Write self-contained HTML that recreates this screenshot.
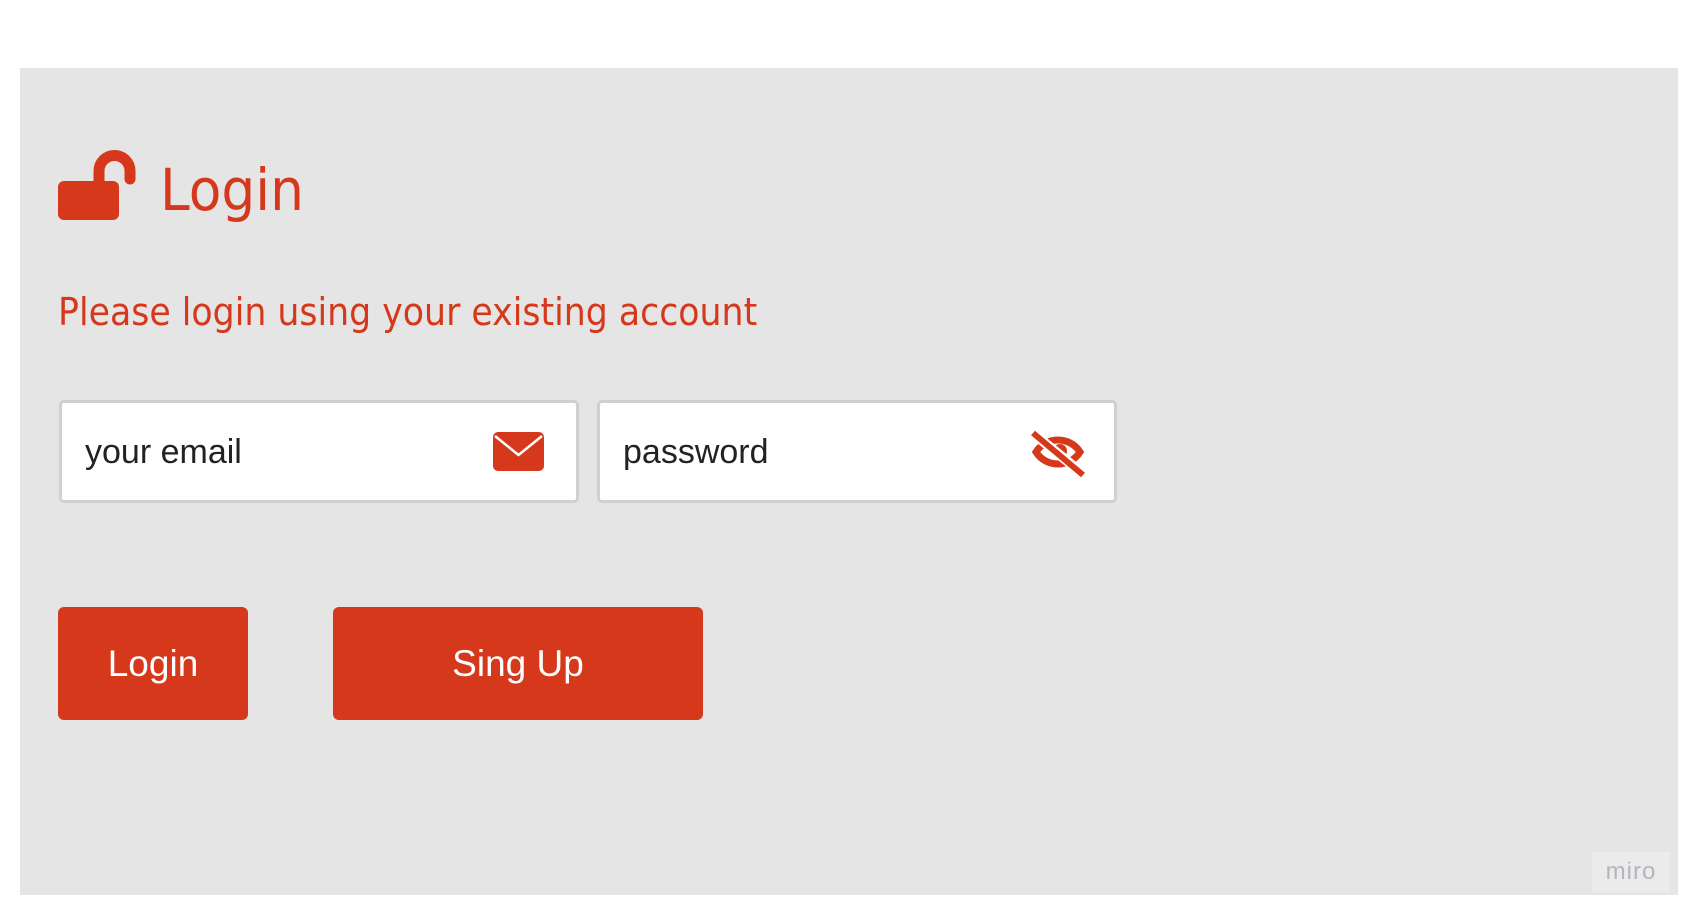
<!DOCTYPE html>
<html><head><meta charset="utf-8"><style>
html,body{margin:0;padding:0;background:#fff;width:1697px;height:920px;overflow:hidden;font-family:"Liberation Sans",Arial,sans-serif}
.panel{position:absolute;left:20px;top:68px;width:1658px;height:827px;background:#e5e5e5}
.abs{position:absolute}
.title{left:160px;top:156px;font-family:"DejaVu Sans","Liberation Sans",sans-serif;font-size:58px;color:#d5381a;transform:scaleX(0.92);transform-origin:left}
.sub{left:58px;top:290px;font-family:"DejaVu Sans","Liberation Sans",sans-serif;font-size:38px;color:#d5381a;white-space:nowrap;transform:scaleX(0.914);transform-origin:left}
.inp{position:absolute;top:400px;height:103px;background:#fff;border:3px solid #d0d0d0;border-radius:5px;box-sizing:border-box}
.inp span{position:absolute;left:23px;top:30px;font-size:34px;color:#222}
.btn{position:absolute;top:607px;height:113px;background:#d5381a;border-radius:6px;color:#fff;font-size:37px;display:flex;align-items:center;justify-content:center}
.miro{left:1592px;top:852px;width:78px;height:40px;background:#ebebeb;color:#b5b5bd;font-size:24px;text-align:center;line-height:40px;letter-spacing:1px}
</style></head><body>
<div class="panel"></div>
<svg class="abs" style="left:0;top:0" width="1697" height="920">
  <rect x="58" y="181" width="61" height="39" rx="6" fill="#d5381a"/>
  <path d="M99 186 V171 A15.5 15.5 0 0 1 130 171 V179" fill="none" stroke="#d5381a" stroke-width="11" stroke-linecap="round"/>
</svg>
<div class="abs title">Login</div>
<div class="abs sub">Please login using your existing account</div>
<div class="inp" style="left:59px;width:520px"><span>your email</span></div>
<div class="inp" style="left:597px;width:520px"><span>password</span></div>
<svg class="abs" style="left:0;top:0;pointer-events:none" width="1697" height="920">
  <rect x="493" y="432" width="51" height="39" rx="5" fill="#d5381a"/>
  <path d="M495 436 L518.5 455 L542 436" fill="none" stroke="#fff" stroke-width="2.5"/>
  <path d="M1036 452 C1046 436 1070 436 1080 452 C1070 468 1046 468 1036 452 Z" fill="none" stroke="#d5381a" stroke-width="7"/>
  <circle cx="1060" cy="451" r="7" fill="#d5381a"/>
  <line x1="1034" y1="434" x2="1083" y2="474" stroke="#fff" stroke-width="10"/>
  <line x1="1033" y1="433" x2="1083" y2="475" stroke="#d5381a" stroke-width="6"/>
</svg>
<div class="btn" style="left:58px;width:190px">Login</div>
<div class="btn" style="left:333px;width:370px">Sing Up</div>
<div class="abs miro">miro</div>
</body></html>
